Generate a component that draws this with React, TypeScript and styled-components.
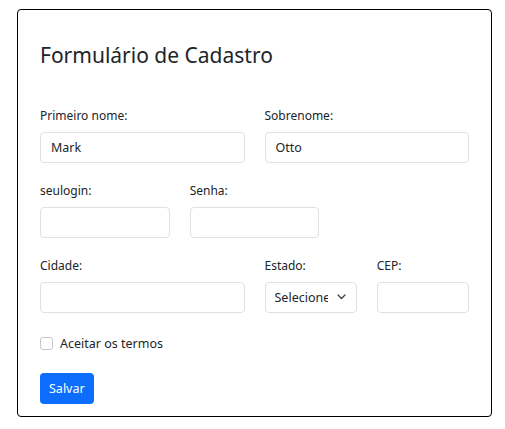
import React from 'react';
import styled, { createGlobalStyle } from 'styled-components';

const GlobalStyle = createGlobalStyle`
  body {
    margin: 0;
    background: #ffffff;
    font-family: 'Noto Sans', 'Open Sans', sans-serif;
    color: #212529;
  }
`;

const Page = styled.div`
  padding: 9px 0 0 17px;
`;

const Card = styled.form`
  box-sizing: border-box;
  width: 475px;
  border: 1px solid #000000;
  border-radius: 4px;
  padding: 22px 22px 12px 22px;
`;

const Title = styled.h3`
  margin: 9px 0 38px 0;
  font-size: 21px;
  line-height: 28px;
  font-weight: 400;
  color: #212529;
`;

const Row = styled.div`
  display: grid;
  grid-template-columns: repeat(12, 1fr);
  column-gap: 20px;
  margin-bottom: 19px;
`;

const Field = styled.div<{ span: number }>`
  grid-column: span ${p => p.span};
  display: flex;
  flex-direction: column;
`;

const Label = styled.label`
  font-size: 12px;
  line-height: 18px;
  margin-bottom: 7px;
`;

const Input = styled.input`
  box-sizing: border-box;
  height: 31px;
  width: 100%;
  border: 1px solid #dee2e6;
  border-radius: 4px;
  padding: 0 10px;
  font-family: inherit;
  font-size: 12.5px;
  color: #212529;
  outline: none;
`;

const SelectWrap = styled.div`
  position: relative;
`;

const Select = styled.select`
  box-sizing: border-box;
  height: 31px;
  width: 100%;
  appearance: none;
  border: 1px solid #dee2e6;
  border-radius: 4px;
  padding: 0 28px 0 9px;
  font-family: inherit;
  font-size: 12.5px;
  color: #212529;
  background: #ffffff;
  outline: none;
`;

const Chevron = styled.svg`
  position: absolute;
  right: 11px;
  top: 12px;
  pointer-events: none;
`;

const CheckRow = styled.div`
  display: flex;
  align-items: center;
  gap: 7px;
  height: 20px;
  margin-top: 20px;
  font-size: 12.5px;
`;

const Check = styled.input`
  box-sizing: border-box;
  appearance: none;
  margin: 0;
  width: 13px;
  height: 13px;
  border: 1px solid #c4c8cc;
  border-radius: 3px;
  background: #ffffff;
`;

const Button = styled.button`
  margin-top: 20px;
  height: 31px;
  padding: 0 9px;
  border: none;
  border-radius: 4px;
  background: #0d6efd;
  color: #ffffff;
  font-family: inherit;
  font-size: 12.5px;
`;

export default function App() {
  return (
    <Page>
      <GlobalStyle />
      <Card onSubmit={e => e.preventDefault()}>
        <Title>Formulário de Cadastro</Title>
        <Row>
          <Field span={6}>
            <Label>Primeiro nome:</Label>
            <Input defaultValue="Mark" />
          </Field>
          <Field span={6}>
            <Label>Sobrenome:</Label>
            <Input defaultValue="Otto" />
          </Field>
        </Row>
        <Row>
          <Field span={4}>
            <Label>seulogin:</Label>
            <Input />
          </Field>
          <Field span={4}>
            <Label>Senha:</Label>
            <Input type="password" />
          </Field>
        </Row>
        <Row style={{ marginBottom: 0 }}>
          <Field span={6}>
            <Label>Cidade:</Label>
            <Input />
          </Field>
          <Field span={3}>
            <Label>Estado:</Label>
            <SelectWrap>
              <Select defaultValue="">
                <option value="">Selecione</option>
              </Select>
              <Chevron width="9" height="6" viewBox="0 0 9 6">
                <path d="M1 1l3.5 3.5L8 1" fill="none" stroke="#343a40" strokeWidth="1.2" strokeLinecap="round" strokeLinejoin="round" />
              </Chevron>
            </SelectWrap>
          </Field>
          <Field span={3}>
            <Label>CEP:</Label>
            <Input />
          </Field>
        </Row>
        <CheckRow>
          <Check type="checkbox" id="termos" />
          <label htmlFor="termos">Aceitar os termos</label>
        </CheckRow>
        <Button type="submit">Salvar</Button>
      </Card>
    </Page>
  );
}
